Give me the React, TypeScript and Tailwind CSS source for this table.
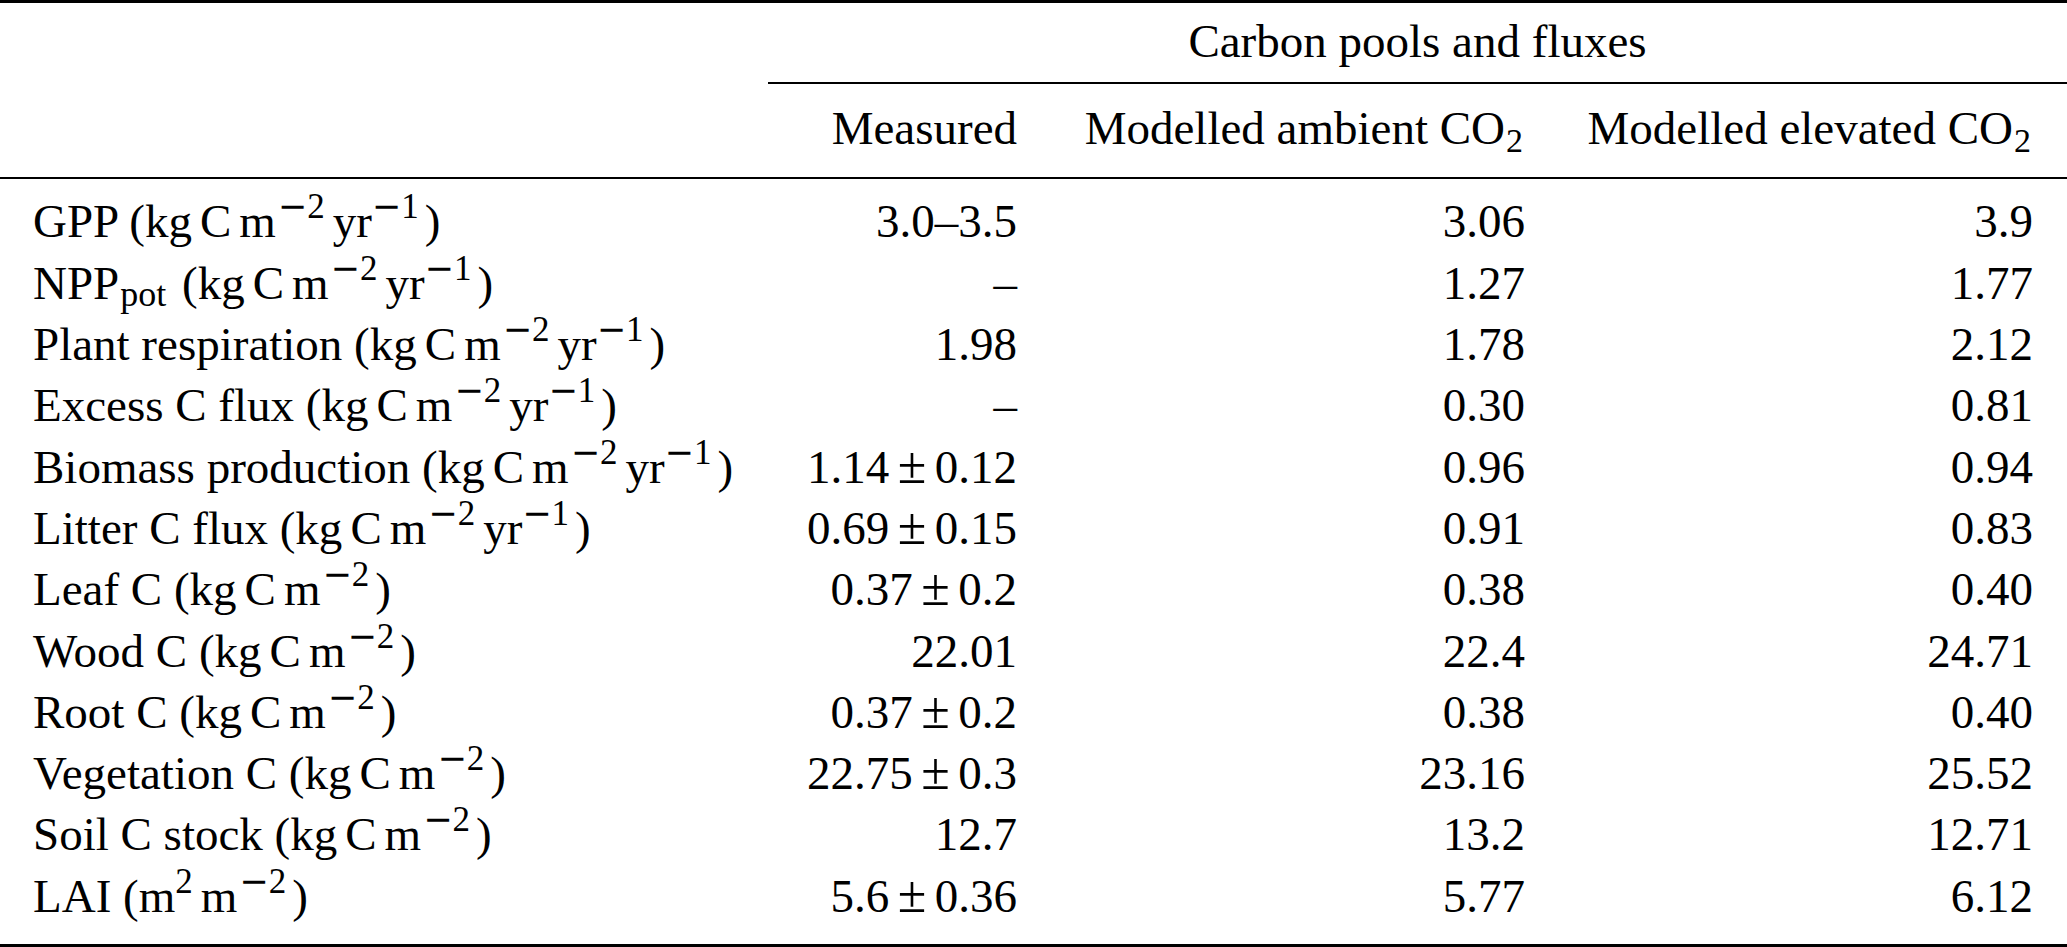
import type { ReactNode } from "react";

// superscript / subscript pieces, leading-[0] keeps the line box steady
const Sup = ({ children, className = "" }: { children: ReactNode; className?: string }) => (
  <span className={`text-[35px] leading-[0] align-[19px] ${className}`}>{children}</span>
);
const Minus = () => <span className="font-['DejaVu_Serif',serif]">−</span>;
const Gap = ({ w }: { w: "thin" | "yr" | "paren" }) => (
  <span className={w === "thin" ? "inline-block w-[8px]" : w === "yr" ? "inline-block w-[8px]" : "inline-block w-[6px]"} />
);

const flux = (
  <>
    (kg<Gap w="thin" />C<Gap w="thin" />m
    <Sup className="ml-[2px]">
      <Minus />2
    </Sup>
    <Gap w="yr" />
    yr
    <Sup>
      <Minus />1
    </Sup>
    <Gap w="paren" />)
  </>
);
const pool = (
  <>
    (kg<Gap w="thin" />C<Gap w="thin" />m
    <Sup className="ml-[2px]">
      <Minus />2
    </Sup>
    <Gap w="paren" />)
  </>
);

const pm = (a: string, b: string) => (
  <>
    {a}
    <span className="text-[52px] leading-[0] mx-[8.5px]">±</span>
    {b}
  </>
);

const rows: { label: ReactNode; measured: ReactNode; ambient: string; elevated: string }[] = [
  { label: <>GPP {flux}</>, measured: "3.0–3.5", ambient: "3.06", elevated: "3.9" },
  {
    label: (
      <>
        NPP<span className="text-[36px] leading-[0] align-[-7px] ml-[1px] mr-[4px]">pot</span> {flux}
      </>
    ),
    measured: "–",
    ambient: "1.27",
    elevated: "1.77",
  },
  { label: <>Plant respiration {flux}</>, measured: "1.98", ambient: "1.78", elevated: "2.12" },
  { label: <>Excess C flux {flux}</>, measured: "–", ambient: "0.30", elevated: "0.81" },
  { label: <>Biomass production {flux}</>, measured: pm("1.14", "0.12"), ambient: "0.96", elevated: "0.94" },
  { label: <>Litter C flux {flux}</>, measured: pm("0.69", "0.15"), ambient: "0.91", elevated: "0.83" },
  { label: <>Leaf C {pool}</>, measured: pm("0.37", "0.2"), ambient: "0.38", elevated: "0.40" },
  { label: <>Wood C {pool}</>, measured: "22.01", ambient: "22.4", elevated: "24.71" },
  { label: <>Root C {pool}</>, measured: pm("0.37", "0.2"), ambient: "0.38", elevated: "0.40" },
  { label: <>Vegetation C {pool}</>, measured: pm("22.75", "0.3"), ambient: "23.16", elevated: "25.52" },
  { label: <>Soil C stock {pool}</>, measured: "12.7", ambient: "13.2", elevated: "12.71" },
  {
    label: (
      <>
        LAI (m<Sup>2</Sup>
        <Gap w="thin" />m
        <Sup className="ml-[2px]">
          <Minus />2
        </Sup>
        <Gap w="paren" />)
      </>
    ),
    measured: pm("5.6", "0.36"),
    ambient: "5.77",
    elevated: "6.12",
  },
];

const cols = "grid grid-cols-[768px_283px_508px_508px]";
const co2 = <span className="text-[34px] leading-[0] align-[-8px] ml-[1px]">2</span>;

export default function App() {
  return (
    <div className="w-[2067px] h-[947px] bg-white text-black font-['Liberation_Serif',serif] text-[47px] leading-[61.3px]">
      {/* toprule */}
      <div className="h-[3px] bg-black" />

      {/* spanner */}
      <div className={`${cols} pt-[7.5px] pb-[10.2px]`}>
        <div />
        <div className="col-span-3 text-center whitespace-nowrap">Carbon pools and fluxes</div>
      </div>
      <div className={cols}>
        <div />
        <div className="col-span-3 h-[2px] bg-black" />
      </div>

      {/* column heads */}
      <div className={`${cols} pt-[14.5px] pb-[17.2px] whitespace-nowrap`}>
        <div />
        <div className="text-right pr-[34px]">Measured</div>
        <div className="text-right pr-[36px]">Modelled ambient CO{co2}</div>
        <div className="text-right pr-[36px]">Modelled elevated CO{co2}</div>
      </div>

      {/* midrule */}
      <div className="h-[2px] bg-black" />

      <div className="pt-[12.5px] pb-[17px]">
        {rows.map((r, i) => (
          <div key={i} className={`${cols} h-[61.3px] whitespace-nowrap`}>
            <div className="pl-[33px]">{r.label}</div>
            <div className="text-right pr-[34px]">{r.measured}</div>
            <div className="text-right pr-[34px]">{r.ambient}</div>
            <div className="text-right pr-[34px]">{r.elevated}</div>
          </div>
        ))}
      </div>

      {/* bottomrule */}
      <div className="h-[3px] bg-black" />
    </div>
  );
}
